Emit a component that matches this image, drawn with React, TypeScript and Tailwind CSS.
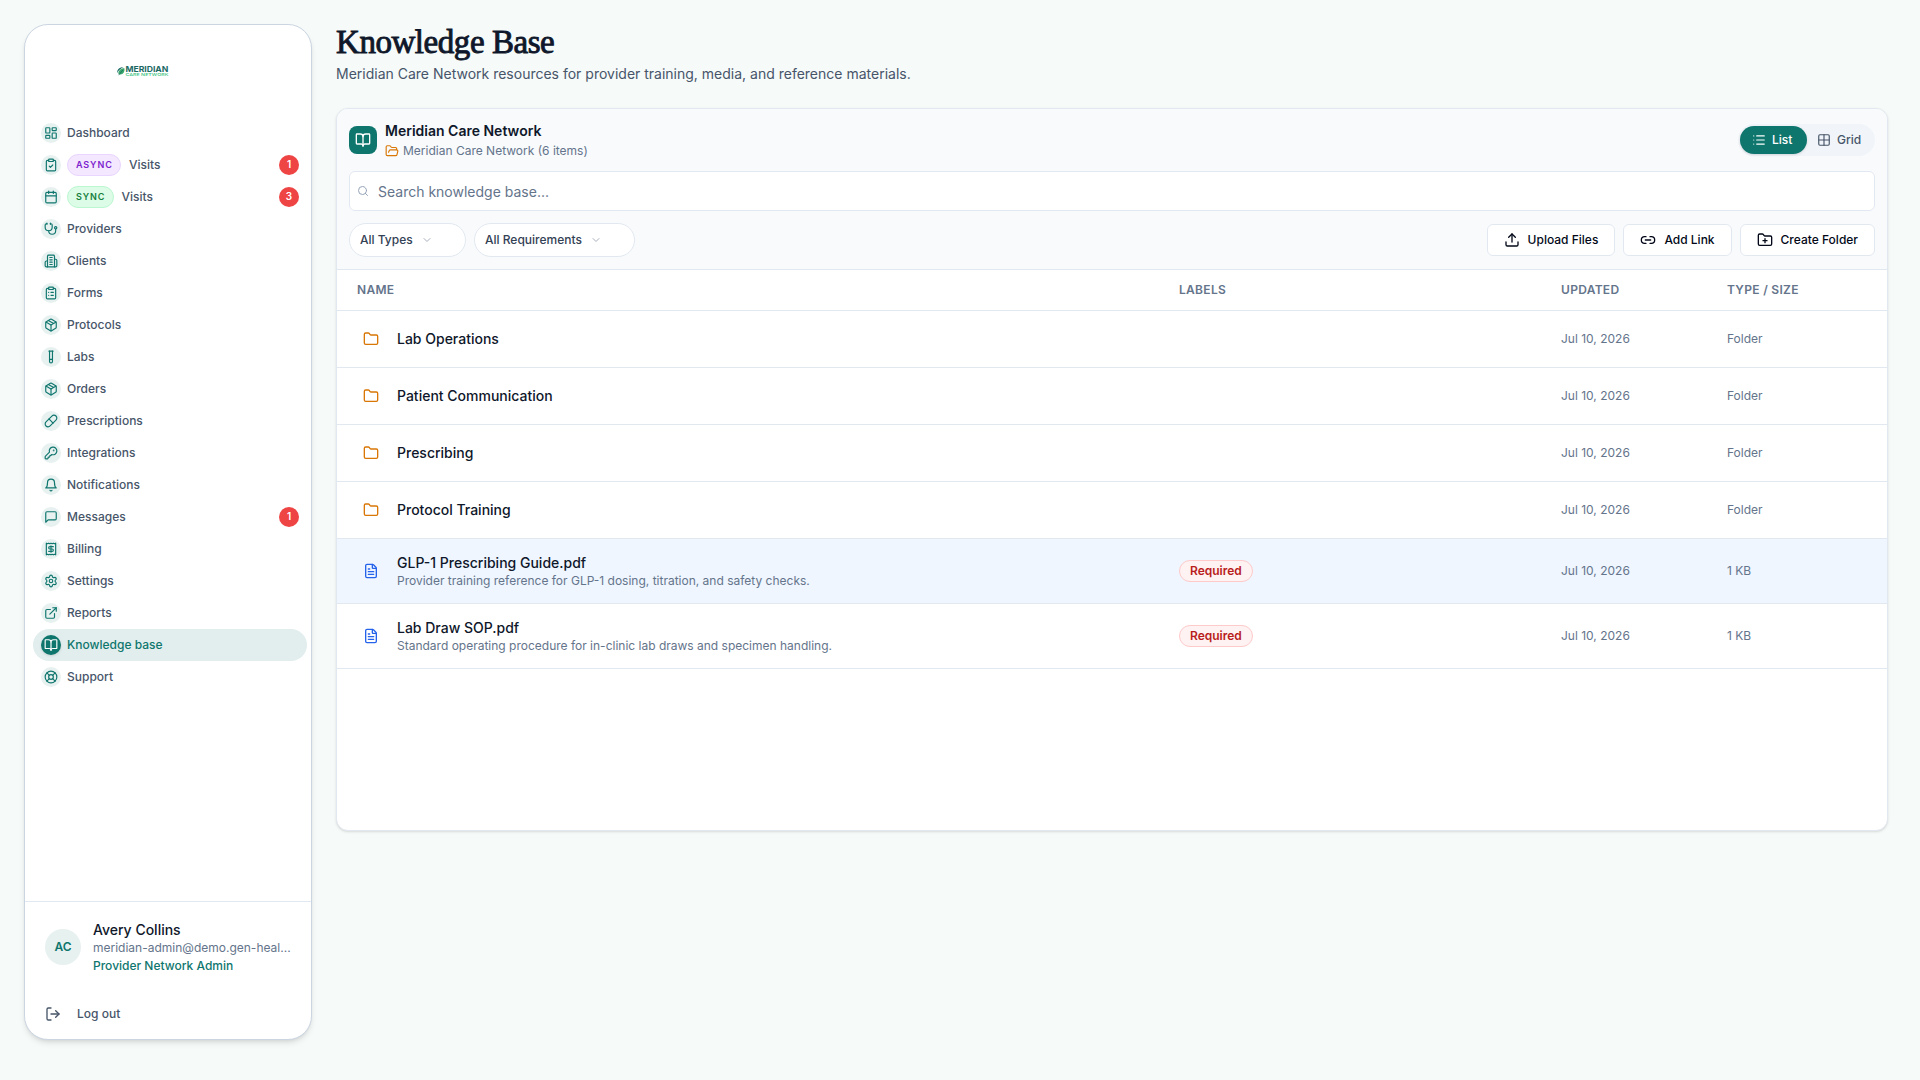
import type { ComponentType, ReactNode } from 'react';
import {
  BookOpen, Calendar, ChevronDown, ClipboardCheck, ClipboardList, ExternalLink, FileText, Folder,
  FolderOpen, FolderPlus, Grid2x2, KeyRound, LayoutDashboard, LifeBuoy, Link2, List, LogOut, Package,
  Pill, Receipt, Search, Settings, Stethoscope, TestTube, Upload,
} from 'lucide-react';

type Icon = ComponentType<{ className?: string; strokeWidth?: number }>;

function strokeIcon(...paths: string[]): Icon {
  return function StrokeIcon({ className, strokeWidth = 2 }) {
    return (
      <svg
        className={className}
        viewBox="0 0 24 24"
        fill="none"
        stroke="currentColor"
        strokeWidth={strokeWidth}
        strokeLinecap="round"
        strokeLinejoin="round"
      >
        {paths.map((d) => (
          <path key={d} d={d} />
        ))}
      </svg>
    );
  };
}

const Building = strokeIcon(
  'M6 22V4a2 2 0 0 1 2-2h8a2 2 0 0 1 2 2v18Z',
  'M6 12H4a2 2 0 0 0-2 2v6a2 2 0 0 0 2 2h2',
  'M18 9h2a2 2 0 0 1 2 2v9a2 2 0 0 1-2 2h-2',
  'M10 6h4',
  'M10 10h4',
  'M10 14h4',
  'M10 18h4',
);
const Bell = strokeIcon('M6 8a6 6 0 0 1 12 0c0 7 3 9 3 9H3s3-2 3-9', 'M10.3 21a1.94 1.94 0 0 0 3.4 0');
const Message = strokeIcon('M21 15a2 2 0 0 1-2 2H7l-4 4V5a2 2 0 0 1 2-2h14a2 2 0 0 1 2 2z');

type NavItem = { label: string; icon: Icon; count?: number; tag?: 'ASYNC' | 'SYNC'; active?: boolean };

const nav: NavItem[] = [
  { label: 'Dashboard', icon: LayoutDashboard },
  { label: 'Visits', icon: ClipboardCheck, tag: 'ASYNC', count: 1 },
  { label: 'Visits', icon: Calendar, tag: 'SYNC', count: 3 },
  { label: 'Providers', icon: Stethoscope },
  { label: 'Clients', icon: Building },
  { label: 'Forms', icon: ClipboardList },
  { label: 'Protocols', icon: Package },
  { label: 'Labs', icon: TestTube },
  { label: 'Orders', icon: Package },
  { label: 'Prescriptions', icon: Pill },
  { label: 'Integrations', icon: KeyRound },
  { label: 'Notifications', icon: Bell },
  { label: 'Messages', icon: Message, count: 1 },
  { label: 'Billing', icon: Receipt },
  { label: 'Settings', icon: Settings },
  { label: 'Reports', icon: ExternalLink },
  { label: 'Knowledge base', icon: BookOpen, active: true },
  { label: 'Support', icon: LifeBuoy },
];

type Entry = { name: string; desc?: string; required?: boolean; type: string; selected?: boolean };

const entries: Entry[] = [
  { name: 'Lab Operations', type: 'Folder' },
  { name: 'Patient Communication', type: 'Folder' },
  { name: 'Prescribing', type: 'Folder' },
  { name: 'Protocol Training', type: 'Folder' },
  {
    name: 'GLP-1 Prescribing Guide.pdf',
    desc: 'Provider training reference for GLP-1 dosing, titration, and safety checks.',
    required: true,
    type: '1 KB',
    selected: true,
  },
  {
    name: 'Lab Draw SOP.pdf',
    desc: 'Standard operating procedure for in-clinic lab draws and specimen handling.',
    required: true,
    type: '1 KB',
  },
];

function Logo() {
  return (
    <svg width="52" height="12" viewBox="0 0 52 12" className="block">
      <path d="M0.4 8C-0.2 4.4 2.4 2.4 6.6 2 4.4 3.4 1.6 4.6 0.4 8Z" fill="#12645f" />
      <path d="M1.2 8.6C1.6 5 4.4 3.2 7.4 3.2 8 7 5.8 9.8 2.8 9.4Z" fill="#3aa76b" />
      <path d="M1.6 10.2 6 4.8" stroke="#12645f" strokeWidth="0.7" fill="none" />
      <text x="8.4" y="6.6" textLength="43" lengthAdjust="spacingAndGlyphs" fontFamily="Inter, sans-serif" fontSize="7.6" fontWeight="700" fill="#1b6863">
        MERIDIAN
      </text>
      <text x="8.4" y="10.9" textLength="43" lengthAdjust="spacingAndGlyphs" fontFamily="Inter, sans-serif" fontSize="4" fontWeight="500" fill="#34c07a">
        CARE NETWORK
      </text>
    </svg>
  );
}

function NavRow({ item }: { item: NavItem }) {
  const { icon: ItemIcon, active, tag, count, label } = item;
  return (
    <a className={`flex h-8 items-center rounded-2xl px-2 text-xs font-medium ${active ? 'bg-[#e1eeed] text-[#0f766e]' : 'text-[#475569]'}`}>
      <span
        className={`mr-1.5 flex size-5 shrink-0 items-center justify-center rounded-full ${
          active ? 'bg-[#0f766e] text-white shadow-sm' : 'bg-[#e7f1f0] text-[#0f766e]'
        }`}
      >
        <ItemIcon className="size-3.5" />
      </span>
      {tag && (
        <span
          className={`mr-2 flex h-[22px] items-center rounded-full border pl-2 text-[9px] font-semibold tracking-[0.9px] ${
            tag === 'ASYNC' ? 'w-[54px] border-[#e9d5ff] bg-[#f3e8ff] text-[#7e22ce]' : 'w-[46.5px] border-[#bbf7d0] bg-[#dcfce7] text-[#15803d]'
          }`}
        >
          {tag}
        </span>
      )}
      <span>{label}</span>
      {count && (
        <span className="ml-auto flex size-5 items-center justify-center rounded-full bg-[#ef4444] text-[10px] font-semibold text-white">{count}</span>
      )}
    </a>
  );
}

function Sidebar() {
  return (
    <aside className="flex h-[1016px] w-72 shrink-0 flex-col rounded-3xl border border-[#cbd5e1] bg-white shadow-md">
      <div className="flex h-[92px] shrink-0 items-center justify-center pr-[51px]">
        <Logo />
      </div>
      <nav className="flex-1 pr-1 pl-2">
        {nav.map((item, i) => (
          <NavRow key={i} item={item} />
        ))}
      </nav>
      <div className="h-[138px] shrink-0 border-t border-[#e2e8f0] px-5 pt-[18px]">
        <div className="flex items-center gap-3">
          <div className="flex size-9 shrink-0 items-center justify-center rounded-full bg-[#e7f1f0] text-xs font-semibold text-[#0f766e]">AC</div>
          <div className="min-w-0">
            <div className="text-sm font-medium text-[#0f172a]">Avery Collins</div>
            <div className="text-xs text-[#64748b]">meridian-admin@demo.gen-heal...</div>
            <div className="mt-0.5 text-xs font-medium text-[#0f766e]">Provider Network Admin</div>
          </div>
        </div>
        <div className="mt-8 flex items-center gap-4 text-xs font-medium text-[#475569]">
          <LogOut className="size-4" />
          Log out
        </div>
      </div>
    </aside>
  );
}

function FilterPill({ children, className }: { children: ReactNode; className: string }) {
  return (
    <div className={`flex h-[34px] items-center gap-2 rounded-full border border-[#e2e8f0] bg-white pl-2.5 text-xs font-medium text-[#334155] ${className}`}>
      {children}
      <ChevronDown className="size-3 text-[#a9b1bd]" />
    </div>
  );
}

function ActionButton({ icon: ButtonIcon, children }: { icon: Icon; children: ReactNode }) {
  return (
    <button className="flex h-8 items-center gap-2 rounded-md border border-[#e2e8f0] bg-white px-4 text-xs font-medium text-[#020817]">
      <ButtonIcon className="size-4" />
      {children}
    </button>
  );
}

const columns = 'grid grid-cols-[822px_382px_166px_1fr] items-center border-b border-[#e2e8f0] px-5';

function EntryRow({ entry }: { entry: Entry }) {
  return (
    <div className={`${columns} ${entry.desc ? 'h-[65px]' : 'h-[57px]'} ${entry.selected ? 'bg-[#eff6ff]' : ''}`}>
      <div className="flex items-center gap-3">
        <span className="flex size-7 items-center justify-center">
          {entry.desc ? <FileText className="size-4 text-[#2563eb]" /> : <Folder className="size-4 text-[#d97706]" />}
        </span>
        <div>
          <div className="text-sm font-medium text-[#0f172a]">{entry.name}</div>
          {entry.desc && <div className="text-xs text-[#64748b]">{entry.desc}</div>}
        </div>
      </div>
      <div className="flex">
        {entry.required && (
          <span className="flex h-[22px] items-center rounded-full border border-[#fecaca] bg-[#fef2f2] px-2.5 text-xs font-semibold text-[#b91c1c]">
            Required
          </span>
        )}
      </div>
      <div className="text-xs text-[#64748b]">Jul 10, 2026</div>
      <div className="text-xs text-[#64748b]">{entry.type}</div>
    </div>
  );
}

export default function App() {
  return (
    <div className="flex h-[1080px] w-[1920px] gap-6 overflow-hidden bg-[#f6faf9] p-6 font-[Inter,sans-serif]">
      <Sidebar />
      <main className="w-[1552px]">
        <h1 className="h-9 font-['Liberation_Serif',serif] text-[33px] leading-[37px] tracking-[-0.45px] whitespace-nowrap text-[#0f172a] [-webkit-text-stroke:0.9px_#0f172a]">
          Knowledge Base
        </h1>
        <p className="mt-1 text-sm text-[#475569]">Meridian Care Network resources for provider training, media, and reference materials.</p>

        <section className="mt-6 h-[723px] overflow-hidden rounded-xl border border-[#e2e8f0] bg-white shadow-sm">
          <div className="flex flex-col gap-3 border-b border-[#e2e8f0] bg-[#f8fafc] p-3">
            <div className="flex items-center justify-between">
              <div className="flex items-center gap-2">
                <div className="flex size-7 items-center justify-center rounded-lg bg-[#0f766e] text-white">
                  <BookOpen className="size-4" />
                </div>
                <div>
                  <div className="text-sm font-semibold text-[#0f172a]">Meridian Care Network</div>
                  <div className="mt-0.5 flex items-center gap-1 text-xs text-[#64748b]">
                    <FolderOpen className="size-3.5 text-[#d97706]" />
                    Meridian Care Network (6 items)
                  </div>
                </div>
              </div>
              <div className="flex rounded-full bg-[#f1f5f9] p-0.5 text-xs font-medium">
                <div className="flex h-7 w-[67px] items-center gap-1.5 rounded-full bg-[#0f766e] pl-3 text-white shadow-sm">
                  <List className="size-3.5" />
                  List
                </div>
                <div className="flex h-7 w-[66px] items-center gap-1.5 pl-2.5 text-[#475569]">
                  <Grid2x2 className="size-3.5" />
                  Grid
                </div>
              </div>
            </div>
            <div className="flex h-10 items-center gap-[9px] rounded-md border border-[#e2e8f0] bg-white px-[7px] text-sm text-[#64748b]">
              <Search className="size-3 text-[#94a3b8]" />
              <span className="pt-0.5">Search knowledge base...</span>
            </div>
            <div className="flex items-center justify-between">
              <div className="flex gap-2">
                <FilterPill className="w-[117px]">All Types</FilterPill>
                <FilterPill className="w-[161px]">All Requirements</FilterPill>
              </div>
              <div className="flex gap-2">
                <ActionButton icon={Upload}>Upload Files</ActionButton>
                <ActionButton icon={Link2}>Add Link</ActionButton>
                <ActionButton icon={FolderPlus}>Create Folder</ActionButton>
              </div>
            </div>
          </div>

          <div className={`${columns} h-[41px] text-xs font-semibold tracking-[0.3px] text-[#64748b]`}>
            <div>NAME</div>
            <div>LABELS</div>
            <div>UPDATED</div>
            <div>TYPE / SIZE</div>
          </div>
          {entries.map((entry) => (
            <EntryRow key={entry.name} entry={entry} />
          ))}
        </section>
      </main>
    </div>
  );
}
